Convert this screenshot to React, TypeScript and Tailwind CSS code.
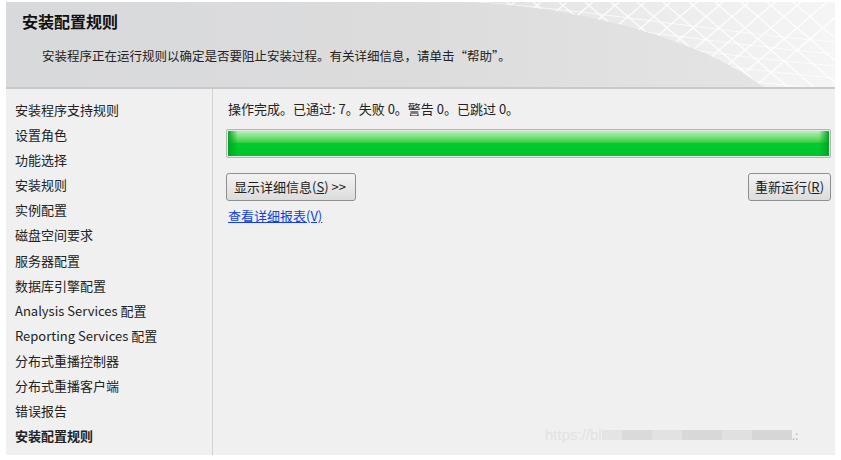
import React from "react";

const steps = [
  "安装程序支持规则",
  "设置角色",
  "功能选择",
  "安装规则",
  "实例配置",
  "磁盘空间要求",
  "服务器配置",
  "数据库引擎配置",
  "Analysis Services 配置",
  "Reporting Services 配置",
  "分布式重播控制器",
  "分布式重播客户端",
  "错误报告",
  "安装配置规则",
];

const font = { fontFamily: '"Noto Sans CJK SC", "Noto Sans", sans-serif' };

const Mesh = () => {
  // white triangular mesh in the header's top right corner
  return (
    <svg className="absolute right-0 top-0" width="360" height="86" viewBox="0 0 360 86">
      <defs>
        <clipPath id="arc">
          <path d="M0 0 C120 8 230 40 290 86 L360 86 L360 0 Z" />
        </clipPath>
        <linearGradient id="fade" x1="0" x2="1" y1="0" y2="0">
          <stop offset="0" stopColor="#ffffff" stopOpacity="0.1" />
          <stop offset="1" stopColor="#ffffff" stopOpacity="0.6" />
        </linearGradient>
      </defs>
      <g clipPath="url(#arc)">
        <rect width="360" height="86" fill="url(#fade)" />
        {Array.from({ length: 14 }, (_, i) => (
          <path key={"a" + i} d={`M${40 + i * 26} 0 L${i * 26 - 60} 86`} stroke="#ffffff" strokeWidth="1.5" opacity="0.8" fill="none" />
        ))}
        {Array.from({ length: 14 }, (_, i) => (
          <path key={"b" + i} d={`M${i * 26 - 20} 0 L${80 + i * 26} 86`} stroke="#ffffff" strokeWidth="1.5" opacity="0.8" fill="none" />
        ))}
        {Array.from({ length: 8 }, (_, i) => (
          <path key={"c" + i} d={`M0 ${i * 12} C120 ${i * 12 + 8} 240 ${i * 12 + 30} 360 ${i * 12 + 40}`} stroke="#ffffff" strokeWidth="1" opacity="0.7" fill="none" />
        ))}
      </g>
    </svg>
  );
};

export default function App() {
  return (
    <div className="w-[841px] h-[460px] bg-white pt-[2px] pl-[6px]" style={font}>
      <div className="w-[829px] h-[453px] flex flex-col bg-[#f0f0f0] relative">
        <div className="relative h-[87px] bg-gradient-to-r from-[#d8d9db] via-[#dcdcdd] to-[#e6e6e6] border-b-2 border-[#c9c9ca] overflow-hidden shrink-0">
          <Mesh />
          <div className="relative pl-[16px] pt-[8px] text-[16px] font-bold text-[#111] leading-[22px]">安装配置规则</div>
          <div className="relative pl-[36px] pt-[16px] text-[12.5px] text-[#222] leading-[16px]">
            安装程序正在运行规则以确定是否要阻止安装过程。有关详细信息，请单击“帮助”。
          </div>
        </div>
        <div className="flex flex-1">
          <div className="w-[207px] border-r border-[#d2d2d2] pt-[12px] pl-[9px]">
            {steps.map((s, i) => (
              <div
                key={s}
                className={`h-[25.1px] text-[13px] leading-[18px] text-[#222] ${i === steps.length - 1 ? "font-bold" : ""}`}
              >
                {s}
              </div>
            ))}
          </div>
          <div className="flex-1 pt-[11px] pl-[13px] pr-[4px]">
            <div className="text-[13px] leading-[18px] text-[#222] pl-[2px]">
              操作完成。已通过: 7。失败 0。警告 0。已跳过 0。
            </div>
            <div className="mt-[11px] h-[29px] rounded-[2px] border border-[#b5b5b5] p-[1px] bg-[#e8e8e8]">
              <div className="h-full rounded-[1px] bg-gradient-to-b from-[#b6f0b8] via-[#00cc2e] to-[#00c42b] relative overflow-hidden">
                <div className="absolute left-0 top-0 h-full w-[10px] bg-gradient-to-r from-[#00a423] to-transparent" />
                <div className="absolute right-0 top-0 h-full w-[10px] bg-gradient-to-l from-[#00a423] to-transparent" />
              </div>
            </div>
            <div className="mt-[15px] flex justify-between">
              <button className="h-[28px] w-[130px] px-[7px] whitespace-nowrap rounded-[3px] border border-[#8e8f8f] bg-gradient-to-b from-[#f3f3f3] to-[#dcdcdc] text-[13px] text-[#222] flex items-center">
                显示详细信息(<span className="underline">S</span>)&nbsp;&gt;&gt;
              </button>
              <button className="h-[28px] w-[83px] px-[2px] whitespace-nowrap rounded-[3px] border border-[#8e8f8f] bg-gradient-to-b from-[#f3f3f3] to-[#dcdcdc] text-[13px] text-[#222] flex items-center justify-center">
                重新运行(<span className="underline">R</span>)
              </button>
            </div>
            <div className="mt-[6px] pl-[2px] text-[13px] leading-[17px] text-[#0f3fe6] underline">查看详细报表(V)</div>
          </div>
        </div>
        <div className="absolute left-[539px] top-[422px] flex items-center">
          <span className="text-[15px] text-[#e2e2e2]" style={{ fontFamily: '"Liberation Sans", sans-serif' }}>https://bl</span>
          <div className="w-[20px] h-[10px] bg-[#e4e4e4]" />
          <div className="w-[30px] h-[10px] bg-[#dadada]" />
          <div className="w-[30px] h-[10px] bg-[#e2e2e2]" />
          <div className="w-[40px] h-[10px] bg-[#d8d8d8]" />
          <div className="w-[30px] h-[10px] bg-[#e0e0e0]" />
          <div className="w-[40px] h-[10px] bg-[#d6d6d6]" />
          <span className="text-[12px] text-[#bbb]">.:</span>
        </div>
      </div>
    </div>
  );
}
